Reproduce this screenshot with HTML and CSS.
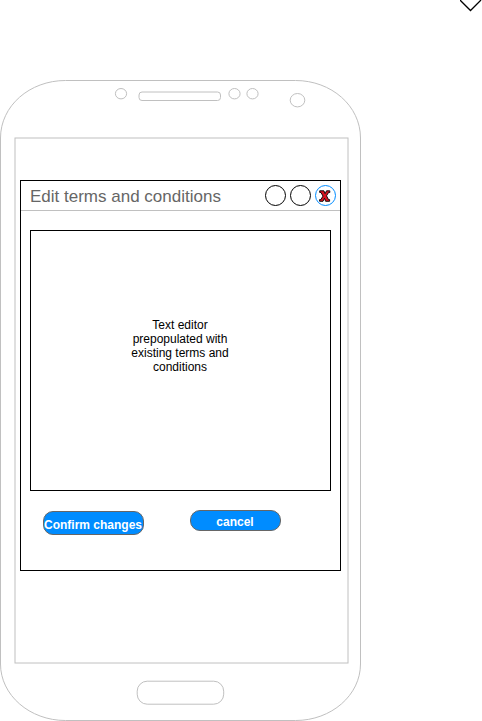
FILE: index.html
```html
<!DOCTYPE html>
<html lang="en">
<head>
<meta charset="utf-8">
<title>Edit terms and conditions</title>
<link rel="stylesheet" href="styles.css">
</head>
<body>
<svg class="connector" width="22" height="12" viewBox="460 0 22 12"><path d="M460 0 470.500 10.500 481 0"/></svg>
<main class="phone">
  <svg class="shell" width="362" height="642" viewBox="0 80 362 642">
    <path d="M65.500 80.500H295.500C331.500 80.500 360.500 106 360.500 138V664C360.500 695 331.500 720.500 295.500 720.500H65.500C29.500 720.500 .5 695 .5 664V138C.5 106 29.500 80.500 65.500 80.500Z"/>
    <rect x="15" y="138" width="333" height="525"/>
    <rect x="139" y="92" width="81.500" height="8.500" rx="3"/>
    <ellipse cx="121" cy="93.700" rx="5.600" ry="5.200"/>
    <ellipse cx="234.500" cy="93.700" rx="5.600" ry="5.200"/>
    <ellipse cx="252.500" cy="93.700" rx="5.600" ry="5.200"/>
    <ellipse cx="297.500" cy="100.200" rx="7.300" ry="6.700"/>
    <rect x="137.200" y="681.200" width="86.500" height="23" rx="10"/>
  </svg>
  <section class="window">
    <header class="titlebar">
      <h1>Edit terms and conditions</h1>
      <div class="controls">
        <span class="control"></span>
        <span class="control"></span>
        <span class="control close">
          <svg width="12" height="12" viewBox="0 0 12 12"><path d="M.7.8H4.900L6.100 3.700 7.500.8H10.800V2.500H9.600L7.500 5.800 9.500 9.600H10.600V11.300H6.600L5.500 8.300 4 11.300H.6V9.600H1.800L4 6.100 1.900 2.500H.7Z"/></svg>
        </span>
      </div>
    </header>
    <div class="editor">Text editor<br>prepopulated with<br>existing terms and<br>conditions</div>
    <div class="actions">
      <button class="confirm">Confirm changes</button>
      <button class="cancel">cancel</button>
    </div>
  </section>
</main>
</body>
</html>
```

FILE: styles.css
```css
* { box-sizing: border-box; }
body {
  margin: 0;
  height: 721px;
  padding-top: 80px;
  overflow: hidden;
  background: #fff;
  font-family: "Liberation Sans", Arial, sans-serif;
}
.connector { position: absolute; top: 0; left: 460px; fill: none; stroke: #000; stroke-width: 1.3; }
.phone { position: relative; width: 361px; height: 641px; padding: 100px 20px 0; }
.shell { position: absolute; top: 0; left: 0; fill: none; stroke: #c0c0c0; }
.window {
  position: relative;
  width: 321px;
  height: 391px;
  border: 1px solid #000;
  background: #fff;
}
.titlebar {
  display: flex;
  justify-content: space-between;
  height: 30px;
  padding: 4px 4px 0 9px;
  border-bottom: 1px solid #c0c0c0;
}
h1 { margin: 0; font-size: 17px; font-weight: 400; line-height: 24px; color: #666; white-space: nowrap; }
.controls { display: flex; gap: 4px; }
.control { width: 21px; height: 21px; border: 1px solid #000; border-radius: 50%; }
.close { padding: 4px 0 0 3px; border-color: #008cff; line-height: 0; }
.close svg { fill: #d81420; stroke: #000; stroke-width: .9; }
.editor {
  width: 301px;
  height: 261px;
  margin: 19px 0 0 9px;
  padding: 87px 1px 0 0;
  border: 1px solid #000;
  font-size: 12px;
  line-height: 14px;
  text-align: center;
}
.actions { display: flex; gap: 46px; padding: 19px 0 0 22px; }
button {
  padding: 0;
  border: 1px solid #666;
  background: #008cff;
  color: #fff;
  font: bold 12px/14px "Liberation Sans", Arial, sans-serif;
  white-space: nowrap;
}
.confirm { width: 101px; height: 24px; margin-top: 1px; padding: 4px 1px 0 0; border-radius: 10px; }
.cancel { width: 91px; height: 21px; padding: 2px 1px 0 0; border-radius: 10px; }
```
